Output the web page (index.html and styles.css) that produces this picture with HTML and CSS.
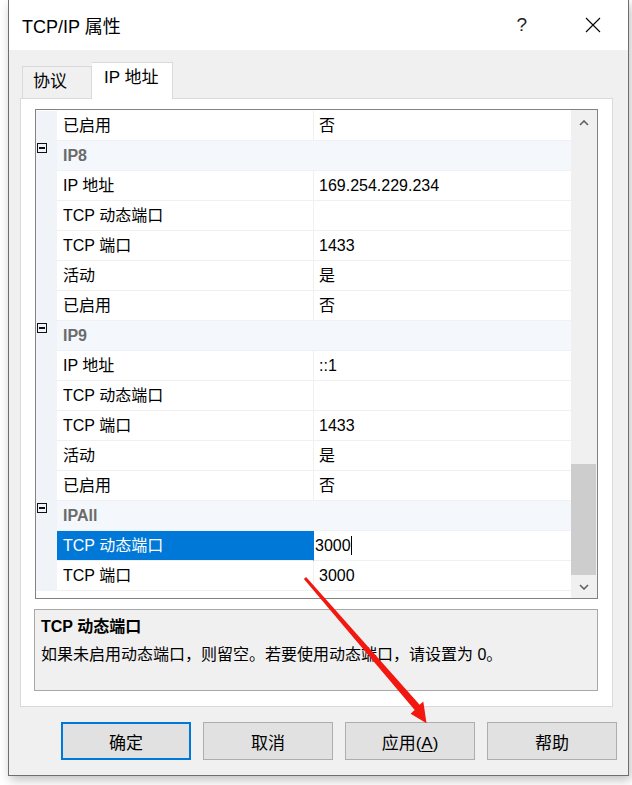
FILE: index.html
```html
<!DOCTYPE html>
<html lang="zh-CN">
<head>
    <meta charset="UTF-8">
    <meta name="viewport" content="width=device-width, initial-scale=1.0">
    <title>TCP/IP 属性</title>
    <link rel="stylesheet" href="styles.css">
</head>
<body>
    <div class="window">
        <div class="titlebar">
            <span class="title">TCP/IP 属性</span>
            <span class="help">?</span>
            <svg class="close" width="16" height="16" viewBox="0 0 16 16">
                <path d="M1 1 L15 15 M15 1 L1 15" stroke="#000" stroke-width="1.1" fill="none"/>
            </svg>
        </div>

        <div class="tabs">
            <div class="tab">协议</div>
            <div class="tab active">IP 地址</div>
        </div>

        <div class="panel">
            <div class="grid">
                <div class="rows">
                    <div class="row"><div class="gut"></div><div class="name">已启用</div><div class="val">否</div></div>
                    <div class="row cat"><div class="gut"><span class="minus"></span></div><div class="name">IP8</div></div>
                    <div class="row"><div class="gut"></div><div class="name">IP 地址</div><div class="val">169.254.229.234</div></div>
                    <div class="row"><div class="gut"></div><div class="name">TCP 动态端口</div><div class="val"></div></div>
                    <div class="row"><div class="gut"></div><div class="name">TCP 端口</div><div class="val">1433</div></div>
                    <div class="row"><div class="gut"></div><div class="name">活动</div><div class="val">是</div></div>
                    <div class="row"><div class="gut"></div><div class="name">已启用</div><div class="val">否</div></div>
                    <div class="row cat"><div class="gut"><span class="minus"></span></div><div class="name">IP9</div></div>
                    <div class="row"><div class="gut"></div><div class="name">IP 地址</div><div class="val">::1</div></div>
                    <div class="row"><div class="gut"></div><div class="name">TCP 动态端口</div><div class="val"></div></div>
                    <div class="row"><div class="gut"></div><div class="name">TCP 端口</div><div class="val">1433</div></div>
                    <div class="row"><div class="gut"></div><div class="name">活动</div><div class="val">是</div></div>
                    <div class="row"><div class="gut"></div><div class="name">已启用</div><div class="val">否</div></div>
                    <div class="row cat"><div class="gut"><span class="minus"></span></div><div class="name">IPAll</div></div>
                    <div class="row selected"><div class="gut"></div><div class="name">TCP 动态端口</div><div class="val edit">3000<span class="caret"></span></div></div>
                    <div class="row"><div class="gut"></div><div class="name">TCP 端口</div><div class="val">3000</div></div>
                </div>
                <div class="scrollbar">
                    <div class="sb-btn up">
                        <svg width="10" height="6" viewBox="0 0 10 6"><path d="M1 5 L5 1 L9 5" stroke="#606060" stroke-width="1.6" fill="none"/></svg>
                    </div>
                    <div class="sb-track"><div class="sb-thumb"></div></div>
                    <div class="sb-btn down">
                        <svg width="10" height="6" viewBox="0 0 10 6"><path d="M1 1 L5 5 L9 1" stroke="#606060" stroke-width="1.6" fill="none"/></svg>
                    </div>
                </div>
            </div>

            <div class="desc">
                <p class="desc-title">TCP 动态端口</p>
                <p class="desc-text">如果未启用动态端口，则留空。若要使用动态端口，请设置为 0。</p>
            </div>
        </div>

        <div class="buttons">
            <button class="btn default">确定</button>
            <button class="btn">取消</button>
            <button class="btn">应用(<u>A</u>)</button>
            <button class="btn">帮助</button>
        </div>
    </div>

    <!-- 红色标注箭头 -->
    <svg class="mark" width="632" height="785" viewBox="0 0 632 785">
        <polygon fill="#f2180f" points="306.1,576.9 419.6,704.8 423.3,701.5 426.5,723.2 410.6,713.7 414.7,709.9 303.9,578.9"/>
    </svg>
</body>
</html>
```

FILE: styles.css
```css
* {
box-sizing: border-box;
}

body {
margin: 0;
background: #fff;
font-family: "Liberation Sans", "Noto Sans CJK SC", sans-serif;
color: #000;
position: relative;
width: 632px;
height: 785px;
overflow: hidden;
}

.window {
margin-left: 8px;
width: 621px;
height: 776px;
background: #f0f0f0;
border: 1px solid #6e6e6e;
border-top: none;
box-shadow: 2px 4px 10px rgba(0, 0, 0, 0.25);
}

.titlebar {
height: 50px;
background: #fff;
display: flex;
align-items: center;
padding-left: 13px;
}

.title {
font-size: 18px;
flex: 1;
}

.help {
font-size: 19px;
font-weight: 300;
color: #222;
margin-right: 58px;
}

.close {
margin-right: 27px;
}

.tabs {
margin-top: 12px;
height: 36px;
padding-left: 13px;
display: flex;
align-items: flex-end;
position: relative;
z-index: 1;
}

.tab {
height: 32px;
padding: 0 10px;
width: 70px;
font-size: 17px;
line-height: 30px;
border: 1px solid #d9d9d9;
border-bottom: none;
background: #f0f0f0;
}

.tab.active {
height: 37px;
width: 81px;
margin-bottom: -1px;
background: #fff;
border-left: none;
padding-left: 12px;
line-height: 30px;
}

.panel {
margin-left: 11px;
width: 593px;
height: 609px;
background: #fff;
border: 1px solid #d9d9d9;
padding: 10px 0 0 14px;
}

.grid {
width: 563px;
height: 490px;
border: 1px solid #828282;
display: flex;
font-size: 16px;
}

.rows {
width: 535px;
padding-top: 1px;
}

.row {
display: flex;
height: 30px;
line-height: 29px;
}

.gut {
width: 21px;
background: #f0f3f8;
position: relative;
}

.name {
width: 257px;
padding-left: 6px;
border-right: 1px solid #f0f0f0;
border-bottom: 1px solid #f0f0f0;
white-space: nowrap;
}

.val {
width: 257px;
padding-left: 5px;
border-bottom: 1px solid #f0f0f0;
}

.row.cat .name {
width: 514px;
border-right: none;
background: #f4f7fb;
color: #6b6b6b;
font-weight: bold;
border-bottom: 1px solid #eef1f6;
}

.minus {
position: absolute;
left: 1px;
top: 2px;
width: 10px;
height: 10px;
border: 1.5px solid #111;
}

.minus::after {
content: "";
position: absolute;
left: 1px;
right: 1px;
top: 3px;
height: 1.5px;
background: #111;
}

.row.selected .name {
background: #0078d7;
color: #fff;
border-right-color: #0078d7;
}

.val.edit {
padding-left: 1px;
}

.caret {
display: inline-block;
width: 1px;
height: 19px;
background: #000;
vertical-align: -4px;
}

.scrollbar {
width: 26px;
background: #f0f0f0;
display: flex;
flex-direction: column;
}

.sb-btn {
height: 25px;
display: flex;
align-items: center;
justify-content: center;
}

.sb-btn.down {
height: 23px;
}

.sb-track {
flex: 1;
padding-right: 1px;
}

.sb-thumb {
margin-top: 329px;
height: 111px;
background: #cdcdcd;
}

.desc {
margin-top: 10px;
margin-left: -1px;
width: 564px;
height: 82px;
background: #f0f0f0;
border: 1px solid #a8a8a8;
padding: 6px 0 0 6px;
}

.desc p {
margin: 0;
font-size: 16px;
line-height: 22px;
}

.desc-title {
font-weight: bold;
}

.desc-text {
margin-top: 6px !important;
}

.buttons {
margin-top: 15px;
padding-left: 52px;
display: flex;
gap: 12px;
}

.btn {
width: 130px;
height: 38px;
appearance: none;
background: #e1e1e1;
border: 1px solid #adadad;
font-family: "Liberation Sans", "Noto Sans CJK SC", sans-serif;
font-size: 17px;
color: #000;
padding: 0;
}

.btn.default {
border: 2px solid #0078d7;
}

.btn u {
text-underline-offset: 2px;
}

.mark {
position: absolute;
left: 0;
top: 0;
pointer-events: none;
}
```
